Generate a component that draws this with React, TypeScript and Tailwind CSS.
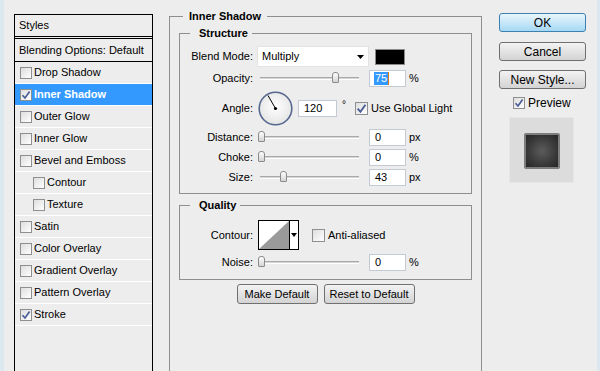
const styleRows = [
  { label: 'Drop Shadow' },
  { label: 'Inner Shadow', checked: true, selected: true },
  { label: 'Outer Glow' },
  { label: 'Inner Glow' },
  { label: 'Bevel and Emboss' },
  { label: 'Contour', indent: true },
  { label: 'Texture', indent: true },
  { label: 'Satin' },
  { label: 'Color Overlay' },
  { label: 'Gradient Overlay' },
  { label: 'Pattern Overlay' },
  { label: 'Stroke', checked: true },
];

const Check = ({ checked = false, size = 12 }: { checked?: boolean; size?: number }) => (
  <div
    className="shrink-0 border border-[#8e8f8f] bg-gradient-to-br from-[#dedede] to-white flex items-center justify-center"
    style={{ width: size, height: size }}
  >
    {checked && (
      <svg width={size - 2} height={size - 2} viewBox="0 0 10 10">
        <path d="M1.5 5.2 L4 8 L8.6 1.6" fill="none" stroke="#4a5c96" strokeWidth="1.7" />
      </svg>
    )}
  </div>
);

const Slider = ({ pos }: { pos: number }) => (
  <div className="relative w-[104px] h-[12px] shrink-0">
    <div className="absolute left-[3px] right-[2px] top-[5px] h-[3px] bg-[#d6d6d6] border-t border-[#a9a9a9] border-b border-b-white" />
    <div
      className="absolute top-0 w-[7px] h-[11px] rounded-t-[3px] rounded-b-[1px] border border-[#8a8a8a] bg-gradient-to-b from-white to-[#d4d4d4]"
      style={{ left: pos }}
    />
  </div>
);

const NumBox = ({ value, w = 37, selected = false }: { value: string; w?: number; selected?: boolean }) => (
  <div
    className="h-[17px] shrink-0 bg-white border border-[#c3cad3] flex items-center pl-[4px] text-[11px]"
    style={{ width: w }}
  >
    {selected ? (
      <>
        <span className="bg-[#3399ff] text-white px-[1px] leading-[13px]">{value}</span>
        <span className="w-[1px] h-[13px] bg-[#e0761c]" />
      </>
    ) : (
      <span className="pl-[1px]">{value}</span>
    )}
  </div>
);

const Label = ({ children }: { children: string }) => (
  <div className="w-[73px] shrink-0 text-right mr-[4px]">{children}</div>
);

const WinButton = ({ children, w, primary = false }: { children: string; w: number; primary?: boolean }) => (
  <div
    className={
      primary
        ? 'h-[19px] rounded-[3px] border border-[#3c7fb1] bg-gradient-to-b from-[#e8f6fd] to-[#a6d8f4] flex items-center justify-center text-[12px]'
        : 'h-[19px] rounded-[3px] border border-[#707070] bg-gradient-to-b from-[#f3f3f3] to-[#d3d3d3] flex items-center justify-center text-[12px]'
    }
    style={{ width: w }}
  >
    {children}
  </div>
);

export default function App() {
  return (
    <div className="w-[600px] h-[371px] overflow-hidden bg-[#ededed] flex border-l-[4px] border-r-[3px] border-[#dbe8ef] font-['Liberation_Sans',Arial,sans-serif] text-[11px] text-black">
      {/* Styles list */}
      <div className="ml-[10px] mt-[14px] w-[139px] h-[380px] shrink-0 border border-black">
        <div className="h-[22px] border-b border-black flex items-center pl-[4px]">Styles</div>
        <div className="mt-[1px] h-[24px] border-y border-black flex items-center pl-[4px]">
          Blending Options: Default
        </div>
        {styleRows.map((row) => (
          <div
            key={row.label}
            className={
              row.selected
                ? 'h-[22px] border-b border-white flex items-center bg-[#3399ff] text-white font-bold'
                : 'h-[22px] border-b border-white flex items-center'
            }
          >
            <div className={row.indent ? 'pl-[18px]' : 'pl-[5px]'}>
              <Check checked={row.checked} />
            </div>
            <span className="ml-[2px]">{row.label}</span>
          </div>
        ))}
      </div>

      {/* Inner Shadow settings */}
      <fieldset className="ml-[16px] mt-[9px] w-[313px] h-[400px] shrink-0 border border-[#8e8e8e] px-[9px] pt-[3px]">
        <legend className="ml-[4px] px-[6px] font-bold leading-[14px]">Inner Shadow</legend>

        <fieldset className="border border-[#8e8e8e] pt-[6px] pb-[7px]">
          <legend className="ml-[10px] pl-[9px] pr-[4px] font-bold leading-[14px]">Structure</legend>

          <div className="h-[21px] flex items-center">
            <Label>Blend Mode:</Label>
            <div className="w-[112px] h-[21px] bg-white border border-[#e2e2e2] flex items-center justify-between pl-[4px] pr-[4px]">
              <span>Multiply</span>
              <svg width="7" height="4" viewBox="0 0 7 4">
                <path d="M0 0 H7 L3.5 4 Z" fill="#000" />
              </svg>
            </div>
            <div className="ml-[6px] w-[30px] h-[16px] bg-black border border-[#8a8a8a]" />
          </div>

          <div className="mt-[2px] h-[18px] flex items-center">
            <Label>Opacity:</Label>
            <Slider pos={75} />
            <div className="ml-[8px]">
              <NumBox value="75" selected />
            </div>
            <span className="ml-[3px]">%</span>
          </div>

          <div className="mt-[3px] h-[36px] flex items-center">
            <Label>Angle:</Label>
            <svg width="35" height="35" viewBox="0 0 35 35" className="ml-[1px] shrink-0">
              <defs>
                <radialGradient id="dialFill" cx="50%" cy="45%" r="60%">
                  <stop offset="0%" stopColor="#ffffff" />
                  <stop offset="100%" stopColor="#e2e2e2" />
                </radialGradient>
              </defs>
              <circle cx="17.5" cy="17.5" r="16.3" fill="url(#dialFill)" stroke="#56678f" strokeWidth="1.6" />
              <line x1="17.5" y1="17.5" x2="10" y2="4.5" stroke="#000" strokeWidth="1" />
              <circle cx="17.5" cy="17.5" r="1.6" fill="#000" />
            </svg>
            <div className="ml-[5px]">
              <NumBox value="120" w={39} />
            </div>
            <span className="ml-[5px] -mt-[8px] text-[10px]">°</span>
            <div className="ml-[9px]">
              <Check checked size={13} />
            </div>
            <span className="ml-[3px]">Use Global Light</span>
          </div>

          <div className="mt-[2px] h-[18px] flex items-center">
            <Label>Distance:</Label>
            <Slider pos={1} />
            <div className="ml-[8px]">
              <NumBox value="0" />
            </div>
            <span className="ml-[3px]">px</span>
          </div>

          <div className="mt-[2px] h-[18px] flex items-center">
            <Label>Choke:</Label>
            <Slider pos={1} />
            <div className="ml-[8px]">
              <NumBox value="0" />
            </div>
            <span className="ml-[3px]">%</span>
          </div>

          <div className="mt-[2px] h-[18px] flex items-center">
            <Label>Size:</Label>
            <Slider pos={23} />
            <div className="ml-[8px]">
              <NumBox value="43" />
            </div>
            <span className="ml-[3px]">px</span>
          </div>
        </fieldset>

        <fieldset className="mt-[4px] border border-[#8e8e8e] pt-[8px] pb-[8px]">
          <legend className="ml-[10px] pl-[9px] pr-[4px] font-bold leading-[14px]">Quality</legend>

          <div className="h-[30px] flex items-center">
            <Label>Contour:</Label>
            <div className="ml-[1px] w-[41px] h-[30px] border border-black bg-white flex shrink-0">
              <svg width="30" height="28" viewBox="0 0 30 28" className="shrink-0">
                <path d="M0 28 L30 0 V28 Z" fill="#9a9a9a" />
              </svg>
              <div className="flex-1 border-l border-black flex items-center justify-center">
                <svg width="6" height="4" viewBox="0 0 6 4">
                  <path d="M0 0 H6 L3 4 Z" fill="#000" />
                </svg>
              </div>
            </div>
            <div className="ml-[13px]">
              <Check size={13} />
            </div>
            <span className="ml-[3px]">Anti-aliased</span>
          </div>

          <div className="mt-[3px] h-[18px] flex items-center">
            <Label>Noise:</Label>
            <Slider pos={1} />
            <div className="ml-[8px]">
              <NumBox value="0" />
            </div>
            <span className="ml-[3px]">%</span>
          </div>
        </fieldset>

        <div className="mt-[4px] flex justify-center gap-[6px]">
          <div className="w-[81px] h-[20px] rounded-[3px] border border-[#707070] bg-gradient-to-b from-[#f3f3f3] to-[#d3d3d3] flex items-center justify-center">
            Make Default
          </div>
          <div className="w-[91px] h-[20px] rounded-[3px] border border-[#707070] bg-gradient-to-b from-[#f3f3f3] to-[#d3d3d3] flex items-center justify-center">
            Reset to Default
          </div>
        </div>
      </fieldset>

      {/* Buttons + preview */}
      <div className="ml-[17px] mt-[13px] w-[87px] shrink-0 flex flex-col">
        <WinButton w={87} primary>OK</WinButton>
        <div className="mt-[10px]">
          <WinButton w={87}>Cancel</WinButton>
        </div>
        <div className="mt-[9px]">
          <WinButton w={87}>New Style...</WinButton>
        </div>
        <div className="mt-[7px] h-[13px] flex items-center pl-[14px] text-[12px]">
          <Check checked />
          <span className="ml-[3px]">Preview</span>
        </div>
        <div className="mt-[8px] ml-[10px] w-[65px] h-[66px] bg-[#dcdcdc] border border-[#e6e6e6] pt-[15px] pl-[14px]">
          <div className="w-[36px] h-[36px] rounded-[2px] border-2 border-[#7d7d7d] bg-[radial-gradient(circle,#5c5c5c_0%,#3a3a3a_60%,#262626_100%)]" />
        </div>
      </div>
    </div>
  );
}
